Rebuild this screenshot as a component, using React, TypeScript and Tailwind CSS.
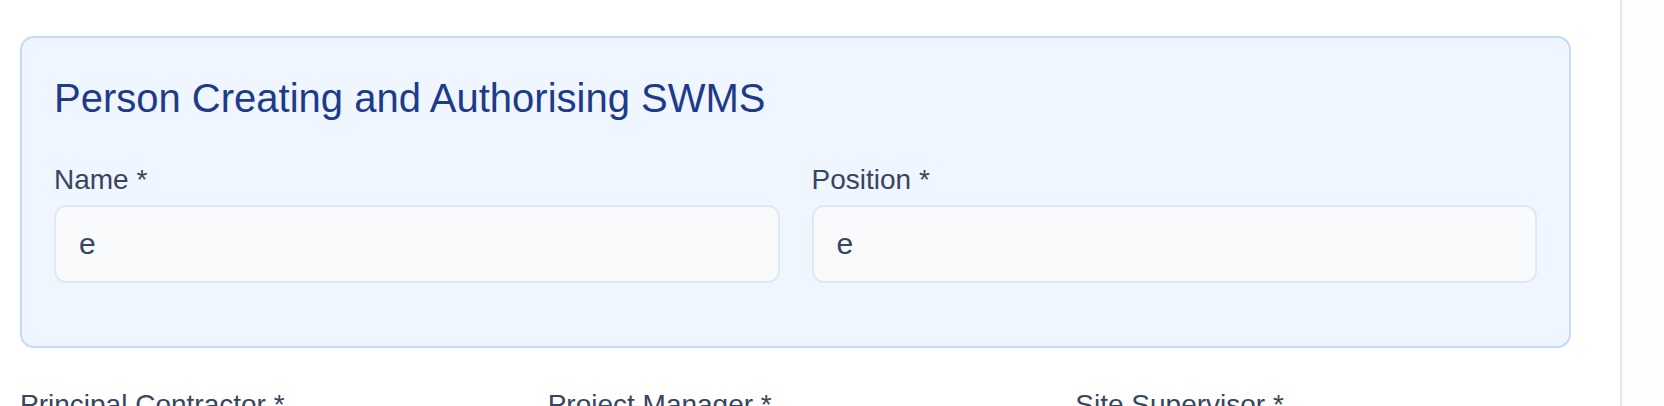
import React, { useState } from "react";

const font = { fontFamily: '"Liberation Sans", Arial, Helvetica, sans-serif' };

function Field({ label, value, onChange }: { label: string; value: string; onChange: (v: string) => void }) {
  return (
    <div className="flex flex-col">
      <label className="text-[28px] leading-[40px] text-[#364560] mb-[5px]">{label}</label>
      <input
        type="text"
        value={value}
        onChange={(e) => onChange(e.target.value)}
        className="h-[78px] w-full px-[23px] rounded-[12px] bg-[#f8fafc] border-2 border-[#e2e8f0] text-[30px] text-[#364560] focus:outline-none"
      />
    </div>
  );
}

export default function App() {
  const [name, setName] = useState("e");
  const [position, setPosition] = useState("e");

  return (
    <div className="flex w-full min-h-[406px] bg-white overflow-hidden" style={font}>
      <div className="w-[1622px] shrink-0 border-r-2 border-[#e2e8f0] px-[20px] pt-[36px]">
        {/* Authorising person panel */}
        <div className="w-[1551px] rounded-[14px] border-2 border-[#c3dafa] bg-[#eff6ff] px-[32px] pt-[32px] pb-[63px]">
          <h2 className="text-[40px] leading-[56px] text-[#1e3a8a] mb-[34px]">
            Person Creating and Authorising SWMS
          </h2>
          <div className="grid grid-cols-2 gap-[32px]">
            <Field label="Name *" value={name} onChange={setName} />
            <Field label="Position *" value={position} onChange={setPosition} />
          </div>
        </div>

        <div className="w-[1551px] grid grid-cols-3 gap-[32px] mt-[37px]">
          <label className="text-[28px] leading-[40px] text-[#364560]">Principal Contractor *</label>
          <label className="text-[28px] leading-[40px] text-[#364560]">Project Manager *</label>
          <label className="text-[28px] leading-[40px] text-[#364560]">Site Supervisor *</label>
        </div>
      </div>
      <div className="flex-1 bg-[#fdfdfe]" />
    </div>
  );
}
